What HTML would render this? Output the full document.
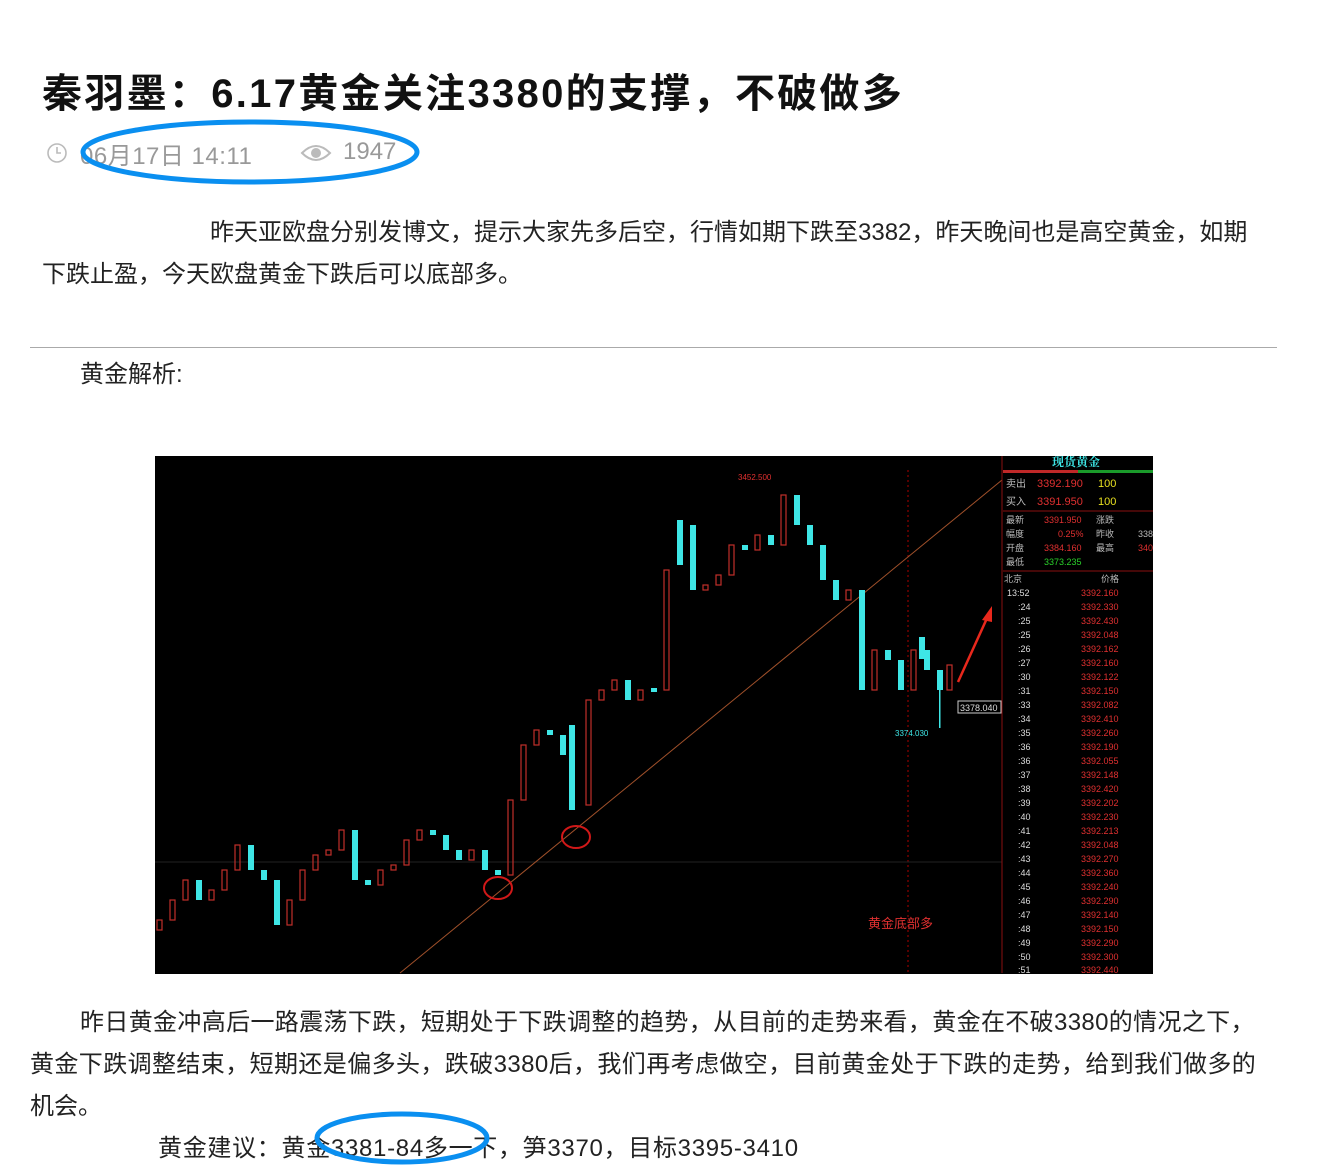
<!DOCTYPE html>
<html><head><meta charset="utf-8"><style>
body{margin:0;background:#fff;width:1332px;height:1173px;overflow:hidden;position:relative;font-family:"Liberation Sans","Noto Sans CJK SC",sans-serif;color:#222}
.a{position:absolute;white-space:nowrap}
h1{position:absolute;left:42px;top:61px;margin:0;font-size:40px;font-weight:bold;color:#111;white-space:nowrap;letter-spacing:2.3px}
.t{font-size:24px;color:#222}
</style></head><body>
<h1>秦羽墨：6.17黄金关注3380的支撑，不破做多</h1>
<svg class="a" style="left:46px;top:142px" width="22" height="22" viewBox="0 0 22 22"><circle cx="11" cy="11" r="9" fill="none" stroke="#bbb" stroke-width="1.6"/><path d="M11 5v6h4" fill="none" stroke="#bbb" stroke-width="1.6"/></svg>
<div class="a" style="left:80px;top:136px;font-size:24px;color:#999;letter-spacing:0.5px">06月17日 14:11</div>
<svg class="a" style="left:300px;top:143px" width="32" height="20" viewBox="0 0 32 20"><path d="M2 10Q16-4 30 10Q16 24 2 10Z" fill="none" stroke="#bbb" stroke-width="2"/><circle cx="16" cy="10" r="5" fill="#bbb"/></svg>
<div class="a" style="left:343px;top:138px;font-size:24px;color:#999">1947</div>
<svg class="a" style="left:0;top:0" width="1332" height="1173"><ellipse cx="250" cy="152" rx="167" ry="30" fill="none" stroke="#0a8ff0" stroke-width="5"/></svg>
<div class="a t" style="left:210px;top:212px">昨天亚欧盘分别发博文，提示大家先多后空，行情如期下跌至3382，昨天晚间也是高空黄金，如期</div>
<div class="a t" style="left:42px;top:254px">下跌止盈，今天欧盘黄金下跌后可以底部多。</div>
<div class="a" style="left:30px;top:347px;width:1247px;height:1px;background:#aaa"></div>
<div class="a t" style="left:80px;top:354px">黄金解析:</div>
<svg class="a" style="left:155px;top:456px" width="998" height="518" viewBox="155 456 998 518">
<rect x="155" y="456" width="998" height="518" fill="#000"/>
<line x1="908" y1="470" x2="908" y2="973" stroke="#a00" stroke-dasharray="2 3"/>
<line x1="155" y1="862" x2="1002" y2="862" stroke="#222"/>
<line x1="400" y1="973" x2="1002" y2="480" stroke="#a0502a" stroke-width="1"/>
<g fill="#3ee6e6">
<rect x="196" y="880" width="6" height="20"/><rect x="248" y="845" width="6" height="25"/><rect x="261" y="870" width="6" height="10"/><rect x="274" y="880" width="6" height="45"/><rect x="352" y="830" width="6" height="50"/><rect x="365" y="880" width="6" height="5"/><rect x="430" y="830" width="6" height="5"/><rect x="443" y="835" width="6" height="15"/><rect x="456" y="850" width="6" height="10"/><rect x="482" y="850" width="6" height="20"/><rect x="495" y="870" width="6" height="5"/><rect x="547" y="730" width="6" height="5"/><rect x="560" y="735" width="6" height="20"/><rect x="569" y="725" width="6" height="85"/><rect x="625" y="680" width="6" height="20"/><rect x="651" y="688" width="6" height="4"/><rect x="677" y="520" width="6" height="45"/><rect x="690" y="525" width="6" height="65"/><rect x="742" y="545" width="6" height="5"/><rect x="768" y="535" width="6" height="10"/><rect x="794" y="495" width="6" height="30"/><rect x="807" y="525" width="6" height="20"/><rect x="820" y="545" width="6" height="35"/><rect x="833" y="580" width="6" height="20"/><rect x="859" y="590" width="6" height="100"/><rect x="885" y="650" width="6" height="10"/><rect x="898" y="660" width="6" height="30"/><rect x="919" y="637" width="6" height="22"/><rect x="924" y="650" width="6" height="20"/><rect x="937" y="670" width="6" height="20"/>
<rect x="939" y="680" width="1.5" height="48"/>
</g>
<g fill="none" stroke="#c0302a" stroke-width="1.2">
<rect x="157" y="920" width="5" height="10"/><rect x="170" y="900" width="5" height="20"/><rect x="183" y="880" width="5" height="20"/><rect x="209" y="890" width="5" height="10"/><rect x="222" y="870" width="5" height="20"/><rect x="235" y="845" width="5" height="25"/><rect x="287" y="900" width="5" height="25"/><rect x="300" y="870" width="5" height="30"/><rect x="313" y="855" width="5" height="15"/><rect x="326" y="850" width="5" height="5"/><rect x="339" y="830" width="5" height="20"/><rect x="378" y="870" width="5" height="15"/><rect x="391" y="865" width="5" height="5"/><rect x="404" y="840" width="5" height="25"/><rect x="417" y="830" width="5" height="10"/><rect x="469" y="850" width="5" height="10"/><rect x="508" y="800" width="5" height="75"/><rect x="521" y="745" width="5" height="55"/><rect x="534" y="730" width="5" height="15"/><rect x="586" y="700" width="5" height="105"/><rect x="599" y="690" width="5" height="10"/><rect x="612" y="680" width="5" height="10"/><rect x="638" y="690" width="5" height="10"/><rect x="664" y="570" width="5" height="120"/><rect x="703" y="585" width="5" height="5"/><rect x="716" y="575" width="5" height="10"/><rect x="729" y="545" width="5" height="30"/><rect x="755" y="535" width="5" height="15"/><rect x="781" y="495" width="5" height="50"/><rect x="846" y="590" width="5" height="10"/><rect x="872" y="650" width="5" height="40"/><rect x="911" y="650" width="5" height="40"/><rect x="947" y="665" width="5" height="25"/>
</g>
<ellipse cx="498" cy="888" rx="14" ry="11" fill="none" stroke="#d01818" stroke-width="2"/>
<ellipse cx="576" cy="837" rx="14" ry="11" fill="none" stroke="#d01818" stroke-width="2"/>
<path d="M958 682L988 616" stroke="#e8281c" stroke-width="2.5"/><path d="M992 606L982 620L992 622Z" fill="#e8281c"/>
<text x="738" y="480" fill="#e03030" font-size="8" font-family="Liberation Sans">3452.500</text>
<text x="895" y="736" fill="#3ee6e6" font-size="8" font-family="Liberation Sans">3374.030</text>
<rect x="958" y="701" width="43" height="12" fill="#000" stroke="#ccc"/>
<text x="960" y="711" fill="#ddd" font-size="9" font-family="Liberation Sans">3378.040</text>
<text x="868" y="928" fill="#e03030" font-size="13" font-family="Liberation Sans,Noto Sans CJK SC">黄金底部多</text>
<line x1="1002" y1="456" x2="1002" y2="973" stroke="#8a1010"/>
<rect x="1003" y="470" width="75" height="3" fill="#c02828"/><rect x="1078" y="470" width="75" height="3" fill="#1a9a2a"/>
<text x="1052" y="466" fill="#3ee6e6" font-size="12" font-weight="bold" font-family="Noto Serif CJK SC">现货黄金</text>
<g font-family="Liberation Sans,Noto Sans CJK SC" font-size="10">
<text x="1006" y="487" fill="#bbb">卖出</text><text x="1037" y="487" fill="#e03030" font-size="11">3392.190</text><text x="1098" y="487" fill="#e8e020" font-size="11">100</text>
<text x="1006" y="505" fill="#bbb">买入</text><text x="1037" y="505" fill="#e03030" font-size="11">3391.950</text><text x="1098" y="505" fill="#e8e020" font-size="11">100</text>
<line x1="1003" y1="511" x2="1153" y2="511" stroke="#8a1010"/>
<text x="1006" y="523" fill="#bbb" font-size="9">最新</text><text x="1044" y="523" fill="#e03030" font-size="9">3391.950</text><text x="1096" y="523" fill="#bbb" font-size="9">涨跌</text>
<text x="1006" y="537" fill="#bbb" font-size="9">幅度</text><text x="1058" y="537" fill="#e03030" font-size="9">0.25%</text><text x="1096" y="537" fill="#bbb" font-size="9">昨收</text><text x="1138" y="537" fill="#bbb" font-size="9">338</text>
<text x="1006" y="551" fill="#bbb" font-size="9">开盘</text><text x="1044" y="551" fill="#e03030" font-size="9">3384.160</text><text x="1096" y="551" fill="#bbb" font-size="9">最高</text><text x="1138" y="551" fill="#e03030" font-size="9">340</text>
<text x="1006" y="565" fill="#bbb" font-size="9">最低</text><text x="1044" y="565" fill="#2ad02a" font-size="9">3373.235</text>
<line x1="1003" y1="571" x2="1153" y2="571" stroke="#8a1010"/>
<text x="1004" y="582" fill="#bbb" font-size="9">北京</text><text x="1101" y="582" fill="#bbb" font-size="9">价格</text>
</g>
<g font-family="Liberation Sans" font-size="9" fill="#ddd">
<text x="1007" y="596">13:52</text><text x="1018" y="610">:24</text><text x="1018" y="624">:25</text><text x="1018" y="638">:25</text><text x="1018" y="652">:26</text><text x="1018" y="666">:27</text><text x="1018" y="680">:30</text><text x="1018" y="694">:31</text><text x="1018" y="708">:33</text><text x="1018" y="722">:34</text><text x="1018" y="736">:35</text><text x="1018" y="750">:36</text><text x="1018" y="764">:36</text><text x="1018" y="778">:37</text><text x="1018" y="792">:38</text><text x="1018" y="806">:39</text><text x="1018" y="820">:40</text><text x="1018" y="834">:41</text><text x="1018" y="848">:42</text><text x="1018" y="862">:43</text><text x="1018" y="876">:44</text><text x="1018" y="890">:45</text><text x="1018" y="904">:46</text><text x="1018" y="918">:47</text><text x="1018" y="932">:48</text><text x="1018" y="946">:49</text><text x="1018" y="960">:50</text><text x="1018" y="973">:51</text>
</g>
<g font-family="Liberation Sans" font-size="9" fill="#e03030">
<text x="1081" y="596">3392.160</text><text x="1081" y="610">3392.330</text><text x="1081" y="624">3392.430</text><text x="1081" y="638">3392.048</text><text x="1081" y="652">3392.162</text><text x="1081" y="666">3392.160</text><text x="1081" y="680">3392.122</text><text x="1081" y="694">3392.150</text><text x="1081" y="708">3392.082</text><text x="1081" y="722">3392.410</text><text x="1081" y="736">3392.260</text><text x="1081" y="750">3392.190</text><text x="1081" y="764">3392.055</text><text x="1081" y="778">3392.148</text><text x="1081" y="792">3392.420</text><text x="1081" y="806">3392.202</text><text x="1081" y="820">3392.230</text><text x="1081" y="834">3392.213</text><text x="1081" y="848">3392.048</text><text x="1081" y="862">3392.270</text><text x="1081" y="876">3392.360</text><text x="1081" y="890">3392.240</text><text x="1081" y="904">3392.290</text><text x="1081" y="918">3392.140</text><text x="1081" y="932">3392.150</text><text x="1081" y="946">3392.290</text><text x="1081" y="960">3392.300</text><text x="1081" y="973">3392.440</text>
</g>
</svg>
<div class="a t" style="left:80px;top:1002px;letter-spacing:0.35px">昨日黄金冲高后一路震荡下跌，短期处于下跌调整的趋势，从目前的走势来看，黄金在不破3380的情况之下，</div>
<div class="a t" style="left:30px;top:1044px;letter-spacing:0.4px">黄金下跌调整结束，短期还是偏多头，跌破3380后，我们再考虑做空，目前黄金处于下跌的走势，给到我们做多的</div>
<div class="a t" style="left:30px;top:1086px">机会。</div>
<div class="a t" style="left:158px;top:1128px;letter-spacing:0.7px">黄金建议：黄金3381-84多一下，笋3370，目标3395-3410</div>
<svg class="a" style="left:0;top:0" width="1332" height="1173"><ellipse cx="402" cy="1138" rx="85" ry="24" fill="none" stroke="#0a8ff0" stroke-width="5"/></svg>
</body></html>
